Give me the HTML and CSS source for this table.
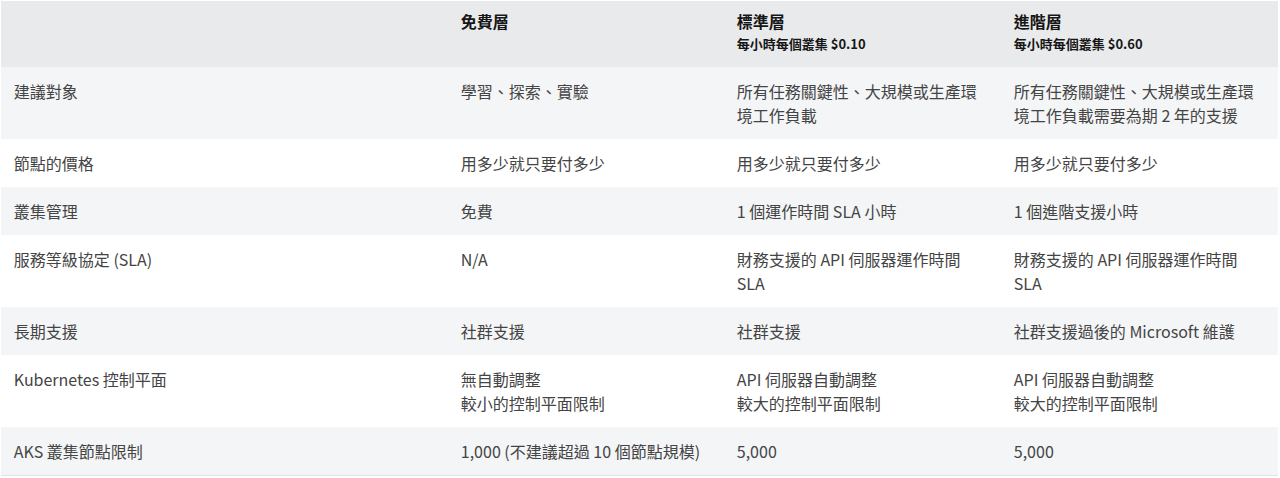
FILE: index.html
```html
<!DOCTYPE html>
<html lang="zh-Hant">
<head>
<meta charset="utf-8">
<link rel="stylesheet" href="styles.css">
</head>
<body>
<table class="tiers">
  <colgroup>
    <col class="c-label">
    <col class="c-free">
    <col class="c-std">
    <col class="c-prem">
  </colgroup>
  <thead>
    <tr>
      <th></th>
      <th><div class="tier">免費層</div></th>
      <th><div class="tier">標準層</div><div class="price">每小時每個叢集 $0.10</div></th>
      <th><div class="tier">進階層</div><div class="price">每小時每個叢集 $0.60</div></th>
    </tr>
  </thead>
  <tbody>
    <tr>
      <td>建議對象</td>
      <td>學習、探索、實驗</td>
      <td>所有任務關鍵性、大規模或生產環境工作負載</td>
      <td>所有任務關鍵性、大規模或生產環境工作負載需要為期 2 年的支援</td>
    </tr>
    <tr>
      <td>節點的價格</td>
      <td>用多少就只要付多少</td>
      <td>用多少就只要付多少</td>
      <td>用多少就只要付多少</td>
    </tr>
    <tr>
      <td>叢集管理</td>
      <td>免費</td>
      <td>1 個運作時間 SLA 小時</td>
      <td>1 個進階支援小時</td>
    </tr>
    <tr>
      <td>服務等級協定 (SLA)</td>
      <td>N/A</td>
      <td>財務支援的 API 伺服器運作時間 SLA</td>
      <td>財務支援的 API 伺服器運作時間 SLA</td>
    </tr>
    <tr>
      <td>長期支援</td>
      <td>社群支援</td>
      <td>社群支援</td>
      <td>社群支援過後的 Microsoft 維護</td>
    </tr>
    <tr>
      <td>Kubernetes 控制平面</td>
      <td>無自動調整<br>較小的控制平面限制</td>
      <td>API 伺服器自動調整<br>較大的控制平面限制</td>
      <td>API 伺服器自動調整<br>較大的控制平面限制</td>
    </tr>
    <tr>
      <td>AKS 叢集節點限制</td>
      <td>1,000 (不建議超過 10 個節點規模)</td>
      <td>5,000</td>
      <td>5,000</td>
    </tr>
  </tbody>
</table>
</body>
</html>
```
FILE: styles.css
```css
html, body {
  margin: 0;
  padding: 0;
  background: #ffffff;
}

body {
  font-family: "Noto Sans CJK TC", sans-serif;
  font-size: 16px;
  color: #444444;
}

.tiers {
  margin: 1px 0 0 1px;
  width: 1277px;
  table-layout: fixed;
  border-collapse: collapse;
  border-bottom: 1px solid #e1e2e3;
}

.c-label { width: 447px; }
.c-free { width: 276px; }
.c-std { width: 277px; }
.c-prem { width: 277px; }

.tiers th,
.tiers td {
  text-align: left;
  vertical-align: top;
  padding: 12px 12.8px;
  line-height: 24px;
  font-family: "Noto Sans CJK TC", sans-serif;
}

.tiers thead tr {
  background: #e9eaeb;
}

.tiers th {
  padding: 8px 12.8px 13px;
  color: #161616;
  font-weight: 700;
  height: 45px;
}

.tier {
  font-size: 16px;
  line-height: 24px;
}

.price {
  font-size: 13px;
  line-height: 21px;
}

.tiers tbody tr:nth-child(odd) {
  background: #f4f5f6;
}

.tiers tbody tr:nth-child(even) {
  background: #ffffff;
}

.tiers td {
  font-size: 16px;
  font-weight: 400;
}
```
